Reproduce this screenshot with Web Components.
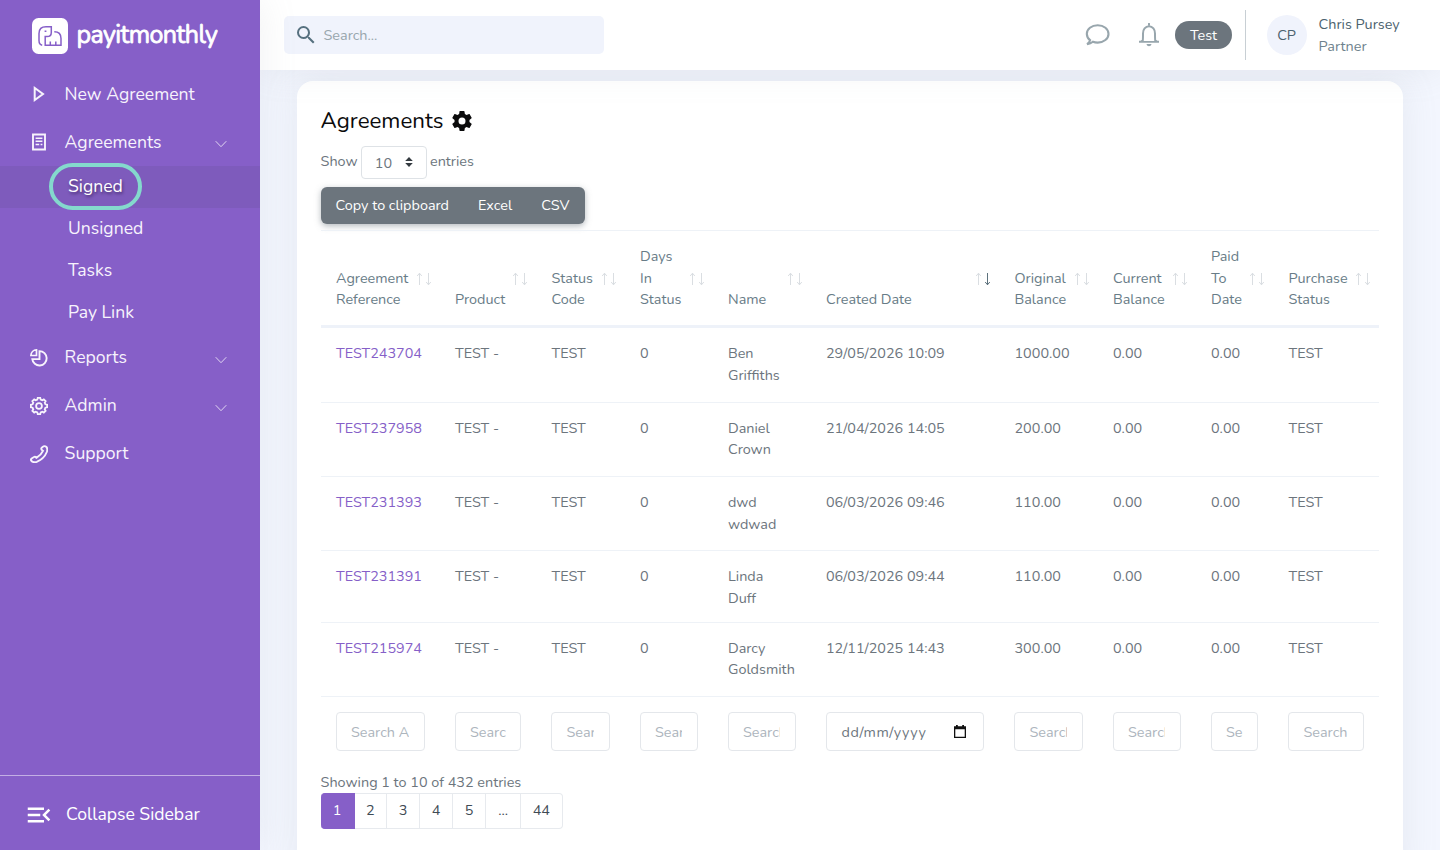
<!DOCTYPE html>
<html lang="en">
<head>
<meta charset="utf-8">
<title>Agreements</title>
<style>
    body {
        margin: 0;
        height: 850px;
        overflow: hidden;
        background: #f3f6fe;
        color: #6c757d;
        font: 14.4px/21.6px Nunito, Lato, sans-serif;
    }
</style>
</head>
<body>
<app-shell>
    <side-bar slot="sidebar"></side-bar>
    <top-bar slot="topbar"></top-bar>
    <agreements-card></agreements-card>
</app-shell>

<script>
// Closed outline with rounded teeth for the settings icon
function gearPath(teeth, inner, outer) {
    const pts = [];
    const step = Math.PI * 2 / teeth;
    for (let i = 0; i < teeth; i++) {
        const a = i * step - Math.PI / 2;
        [[-0.33, inner], [-0.2, outer], [0.2, outer], [0.33, inner]].forEach(([o, r]) => {
            pts.push((9 + r * Math.cos(a + o * step)).toFixed(2) + ' ' + (9 + r * Math.sin(a + o * step)).toFixed(2));
        });
    }
    return 'M' + pts.join('L') + 'Z';
}

const ICONS = {
    play: ['0 0 18 18', '<path d="M4.7 3v12l8.3-6z" class="s" stroke-width="2"/>'],
    doc: ['0 0 18 18', '<path d="M3 1.5h12v15H3z" class="s" stroke-width="1.9"/><path d="M5.6 5.2h6.8M5.6 8.3h6.8M5.6 11.6h3.6M10.6 11.6h1.8" class="s" stroke-width="1.5"/>'],
    pie: ['0 0 18 18', '<path d="M9.5 2.1a7.2 7.2 0 1 1-7.2 8h7.2z" class="s" stroke-width="1.9"/><path d="M6.5.9v5.6H.9A5.8 5.8 0 0 1 6.5.9z" class="s" stroke-width="1.7"/>'],
    gear: ['0 0 18 18', `<path d="${gearPath(8, 6.6, 8.2)}" class="s" stroke-width="1.8"/><circle cx="9" cy="9" r="2.9" class="s" stroke-width="1.8"/>`],
    phone: ['0 0 18 18', '<path d="M12.2 2.3Q14.5.3 16.2 1.7 18 3.4 16.8 7 14 14 6.7 16.8 3.2 18 1.2 15.6.4 14.2 2 13.2L4 12Q5.2 11.4 6.4 12.8 11 10.2 13 5.8 11.2 4.8 11.2 3.8 11.3 3 12.2 2.3Z" class="s" stroke-width="1.9"/>'],
    collapse: ['0 0 24 24', '<path d="M21 15.61 19.59 17l-5.01-5 5.01-5L21 8.39 17.44 12 21 15.61M3 6h13v2H3V6m0 7v-2h10v2H3m0 5v-2h13v2H3z"/>'],
    chevron: ['0 0 12 8', '<path d="M.7 1.2 6 6.7l5.3-5.5" class="s" stroke-width="1"/>'],
    search: ['0 0 24 24', '<path d="M9.5 3A6.5 6.5 0 0 1 16 9.5c0 1.61-.59 3.09-1.56 4.23l.27.27h.79l5 5-1.5 1.5-5-5v-.79l-.27-.27A6.516 6.516 0 0 1 9.5 16 6.5 6.5 0 0 1 3 9.5 6.5 6.5 0 0 1 9.5 3m0 2C7 5 5 7 5 9.5S7 14 9.5 14 14 12 14 9.5 12 5 9.5 5z"/>'],
    chat: ['0 0 24 22', '<path d="M4.6 16.2A8.1 8.1 0 0 1 1.3 9.9C1.3 5.2 6 1.2 12.2 1.2S23 5.2 23 9.9s-4.7 8.7-10.8 8.7c-1.8 0-3.4-.3-4.8-.9-1.5 1.2-3.3 2-5.8 2.4 1.5-1.1 2.6-2.4 3-3.9z" class="s" stroke-width="2.1"/>'],
    bell: ['0 0 20 24', '<path d="M3.6 18.5c.4-1 .4-2.6.4-8A6 6.8 0 0 1 10 3.2a6 6.8 0 0 1 6 7.3c0 5.4 0 7 .4 8" class="s" stroke-width="2"/><path d="M0 17.8h1.5l1.7-1v1.2h13.6v-1.2l1.7 1H20v2H0zM7.500 21h5c-.3 1.6-1.3 2.2-2.5 2.2S7.8 22.6 7.5 21zM9 .8a1 1 0 0 1 2 0v2H9z"/>'],
    cog: ['0 0 24 24', '<path d="M12 15.5A3.5 3.5 0 0 1 8.5 12 3.5 3.5 0 0 1 12 8.5a3.5 3.5 0 0 1 3.5 3.5 3.5 3.5 0 0 1-3.5 3.5m7.43-2.53c.04-.32.07-.64.07-.97 0-.33-.03-.66-.07-1l2.11-1.63c.19-.15.24-.42.12-.64l-2-3.46c-.12-.22-.39-.31-.61-.22l-2.49 1c-.52-.39-1.06-.73-1.69-.98l-.37-2.65A.506.506 0 0 0 14 2h-4c-.25 0-.46.18-.5.42l-.37 2.65c-.63.25-1.17.59-1.69.98l-2.49-1c-.22-.09-.49 0-.61.22l-2 3.46c-.13.22-.07.49.12.64L4.57 11c-.04.34-.07.67-.07 1 0 .33.03.65.07.97l-2.11 1.66c-.19.15-.25.42-.12.64l2 3.46c.12.22.39.3.61.22l2.49-1.01c.52.4 1.06.74 1.69.99l.37 2.65c.04.24.25.42.5.42h4c.25 0 .46-.18.5-.42l.37-2.65c.63-.26 1.17-.59 1.69-.99l2.49 1.01c.22.08.49 0 .61-.22l2-3.46c.12-.22.07-.49-.12-.64l-2.11-1.66z"/>'],
    updown: ['0 0 8 10', '<path d="M4 0l3.8 4.1H.2zM4 10 .2 5.9h7.6z"/>'],
    calendar: ['0 0 12 13', '<path d="M2 0h1.8v1.2h4.4V0H10v1.2h2V13H0V1.2h2zM1.3 4.3v7.4h9.4V4.3z" fill-rule="evenodd"/>'],
    logo: ['0 0 36 36', '<rect width="36" height="36" rx="6.5" fill="#fff"/><path d="M10.2 27.2Q7 26.5 7 22.5V15.5Q7 8.7 14 8.7H19.3V14.5Q19.3 18.6 15 18.6H13.2V27.3H29V20.5Q29 13.7 22.3 13.7M18.3 27V23.4M23.8 27V23.4M12.6 13.3h1.8" fill="none" stroke="#865fc8" stroke-width="1.5"/>']
};

class UiIcon extends HTMLElement {
    connectedCallback() {
        const [box, body] = ICONS[this.getAttribute('name')];
        const w = this.getAttribute('w');
        const h = this.getAttribute('h') || w;
        this.attachShadow({ mode: 'open' }).innerHTML = `
            <style>
                :host { display: inline-block; flex: none; }
                svg { display: block; fill: currentColor; }
                .s { fill: none; stroke: currentColor; }
            </style>
            <svg width="${w}" height="${h}" viewBox="${box}">${body}</svg>
        `;
    }
}
customElements.define('ui-icon', UiIcon);

class AppShell extends HTMLElement {
    constructor() {
        super();
        this.attachShadow({ mode: 'open' }).innerHTML = `
            <style>
                :host { display: grid; grid-template: 70px 780px / 260px 1180px; }
                .side { grid-row: 1 / 3; z-index: 3; }
                .top { z-index: 2; }
                .main { padding: 11px 37px 0 36.6px; overflow: hidden; }
            </style>
            <div class="side"><slot name="sidebar"></slot></div>
            <div class="top"><slot name="topbar"></slot></div>
            <div class="main"><slot></slot></div>
        `;
    }
}
customElements.define('app-shell', AppShell);

class NavItem extends HTMLElement {
    connectedCallback() {
        const icon = this.getAttribute('icon');
        this.attachShadow({ mode: 'open' }).innerHTML = `
            <style>
                :host {
                    display: flex;
                    align-items: center;
                    height: 47.9px;
                    padding: 0 33.5px 0 30px;
                    font-size: 17.6px;
                    color: #f7f3fc;
                }
                :host([sub]) { height: 42px; padding-left: 68px; }
                :host([active]) { background: rgba(90, 75, 130, .16); }
                ui-icon { margin-top: 1px; }
                .label { margin-left: 16.6px; flex: 1; padding-top: 1px; }
                :host([sub]) .label { margin: 0; position: relative; }
                :host([active]) .label { text-shadow: 1px 2px 3px rgba(40, 20, 70, .6); color: #fff; }
                .ring {
                    position: absolute;
                    left: -19px;
                    top: -12px;
                    width: 85px;
                    height: 39px;
                    border: 4px solid #84d9cd;
                    border-radius: 24px;
                }
                .arrow { opacity: .8; margin-top: 5px; }
            </style>
            ${icon ? `<ui-icon name="${icon}" w="18"></ui-icon>` : ''}
            <div class="label">
                ${this.hasAttribute('active') ? '<span class="ring"></span>' : ''}
                <slot></slot>
            </div>
            ${this.hasAttribute('more') ? '<ui-icon class="arrow" name="chevron" w="12" h="8"></ui-icon>' : ''}
        `;
    }
}
customElements.define('nav-item', NavItem);

class SideBar extends HTMLElement {
    connectedCallback() {
        this.attachShadow({ mode: 'open' }).innerHTML = `
            <style>
                :host {
                    display: flex;
                    flex-direction: column;
                    height: 850px;
                    background: #865fc8;
                    color: #fff;
                    box-shadow: 0 0 35px rgba(154, 161, 171, .15);
                }
                .logo { display: flex; height: 52px; padding: 18px 0 0 32px; }
                .brand {
                    margin: 2px 0 0 8.5px;
                    font-size: 25px;
                    line-height: 30px;
                    letter-spacing: -.58px;
                    -webkit-text-stroke: .8px #fff;
                }
                nav { flex: 1; }
                .collapse {
                    display: flex;
                    align-items: center;
                    gap: 12.4px;
                    height: 75px;
                    padding: 3px 0 0 23.6px;
                    box-sizing: border-box;
                    border-top: 1px solid #c3afe4;
                    font-size: 17.6px;
                }
            </style>
            <div class="logo">
                <ui-icon name="logo" w="36"></ui-icon>
                <span class="brand">payitmonthly</span>
            </div>
            <nav>
                <nav-item icon="play">New Agreement</nav-item>
                <nav-item icon="doc" more>Agreements</nav-item>
                <nav-item sub active>Signed</nav-item>
                <nav-item sub>Unsigned</nav-item>
                <nav-item sub>Tasks</nav-item>
                <nav-item sub>Pay Link</nav-item>
                <nav-item icon="pie" more>Reports</nav-item>
                <nav-item icon="gear" more>Admin</nav-item>
                <nav-item icon="phone">Support</nav-item>
            </nav>
            <div class="collapse">
                <ui-icon name="collapse" w="30"></ui-icon>
                <span>Collapse Sidebar</span>
            </div>
        `;
    }
}
customElements.define('side-bar', SideBar);

class TopBar extends HTMLElement {
    connectedCallback() {
        this.attachShadow({ mode: 'open' }).innerHTML = `
            <style>
                :host {
                    display: flex;
                    align-items: center;
                    height: 70px;
                    box-sizing: border-box;
                    padding: 0 0 0 24px;
                    background: #fff;
                    box-shadow: 0 0 35px rgba(154, 161, 171, .15);
                    color: #98a6ad;
                }
                .search {
                    display: flex;
                    align-items: center;
                    gap: 6px;
                    width: 310.5px;
                    height: 38px;
                    padding-left: 9.5px;
                    border-radius: 5px;
                    background: #f0f3fc;
                }
                .search ui-icon { color: #56707f; }
                .search span { padding-top: 1px; }
                .chat { margin: 0 0 1px 481px; }
                .bell { margin: 0 16.6px 1px 28.5px; }
                .badge {
                    width: 57px;
                    height: 28px;
                    line-height: 28px;
                    text-align: center;
                    border-radius: 14px;
                    background: #6c757d;
                    color: #fff;
                }
                .rule { width: 1px; height: 50px; margin: 0 21px 0 12.5px; background: #c8cfd4; }
                .avatar {
                    width: 40px;
                    height: 40px;
                    line-height: 40px;
                    text-align: center;
                    border-radius: 50%;
                    background: #f0f3fc;
                    color: #4b626e;
                }
                .user { margin-left: 12px; padding-top: 2px; color: #4b626e; }
                .user div + div { color: #6e828d; }
            </style>
            <div class="search">
                <ui-icon name="search" w="24"></ui-icon>
                <span>Search...</span>
            </div>
            <ui-icon class="chat" name="chat" w="25" h="22"></ui-icon>
            <ui-icon class="bell" name="bell" w="20" h="24"></ui-icon>
            <div class="badge">Test</div>
            <div class="rule"></div>
            <div class="avatar">CP</div>
            <div class="user">
                <div>Chris Pursey</div>
                <div>Partner</div>
            </div>
        `;
    }
}
customElements.define('top-bar', TopBar);

const COLUMNS = [
    { head: ['Agreement', 'Reference'] },
    { head: ['Product'] },
    { head: ['Status', 'Code'] },
    { head: ['Days', 'In', 'Status'] },
    { head: ['Name'] },
    { head: ['Created Date'], sorted: true, date: true },
    { head: ['Original', 'Balance'] },
    { head: ['Current', 'Balance'] },
    { head: ['Paid', 'To', 'Date'] },
    { head: ['Purchase', 'Status'] }
];

const ROWS = [
    ['TEST243704', ['Ben', 'Griffiths'], '29/05/2026 10:09', '1000.00'],
    ['TEST237958', ['Daniel', 'Crown'], '21/04/2026 14:05', '200.00'],
    ['TEST231393', ['dwd', 'wdwad'], '06/03/2026 09:46', '110.00'],
    ['TEST231391', ['Linda', 'Duff'], '06/03/2026 09:44', '110.00'],
    ['TEST215974', ['Darcy', 'Goldsmith'], '12/11/2025 14:43', '300.00']
];

const lines = list => list.map(text => `<div>${text}</div>`).join('');

class DataGrid extends HTMLElement {
    connectedCallback() {
        const head = COLUMNS.map(c => `
            <div class="cell">
                ${lines(c.head)}
                <svg class="sort" width="16" height="14" viewBox="0 0 16 14" fill="none">
                    <path d="M3.5 13V1M1.2 4l2.3-2.8L5.8 4" stroke="#dadee2"/>
                    <path d="M12.5 1v12M10.2 10l2.3 2.8 2.3-2.8" stroke="${c.sorted ? '#5d727d' : '#dadee2'}"/>
                </svg>
            </div>`).join('');

        const body = ROWS.map(([ref, name, date, amount]) => {
            const cells = [[ref], ['TEST -'], ['TEST'], ['0'], name, [date], [amount], ['0.00'], ['0.00'], ['TEST']];
            return `<div class="row">${cells.map(c => `<div class="cell">${lines(c)}</div>`).join('')}</div>`;
        }).join('');

        const foot = COLUMNS.map(c => `
            <div class="cell">${c.date
                ? '<div class="input date"><span>dd/mm/yyyy</span><ui-icon name="calendar" w="12" h="13"></ui-icon></div>'
                : `<input class="input" placeholder="Search ${c.head.join(' ')}">`}</div>`).join('');

        this.attachShadow({ mode: 'open' }).innerHTML = `
            <style>
                :host { display: block; border-top: 1px solid #eef2f7; }
                .row {
                    display: grid;
                    grid-template-columns: 119px 96.5px 88.5px 88px 98px 188.5px 98.5px 98px 77.5px 105.5px;
                    box-sizing: border-box;
                    height: 74.4px;
                    border-bottom: 1px solid #eef2f7;
                    line-height: 21.7px;
                }
                .row:nth-of-type(5) { height: 71.4px; }
                .cell { padding: 15px 0 0 15.4px; min-width: 0; }
                .row .cell:first-child { color: #865fc8; }
                .head.row { height: 97.7px; border-bottom: 3px solid #eef2f9; color: #687c87; }
                .head.row .cell {
                    display: flex;
                    flex-direction: column;
                    justify-content: flex-end;
                    position: relative;
                    padding: 0 0 14.2px 15.4px;
                    color: inherit;
                }
                .sort { position: absolute; right: 8px; top: 41px; }
                .foot.row { border: 0; height: 74.4px; }
                .foot .cell { padding: 15px 15px 0 15px; }
                .input {
                    display: block;
                    box-sizing: border-box;
                    width: 100%;
                    height: 38.5px;
                    margin: 0;
                    padding: 1px 14.4px 0;
                    border: 1px solid #e4e7eb;
                    border-radius: 4px;
                    background: #fff;
                    font: inherit;
                }
                .input::placeholder { color: #adb5bd; opacity: 1; }
                .date {
                    display: flex;
                    align-items: center;
                    justify-content: space-between;
                    color: #6c757d;
                }
                .date span { letter-spacing: .65px; margin-left: .5px; padding-top: 1px; }
                .date ui-icon { color: #111; margin: 0 3px 1px 0; }
            </style>
            <div class="row head">${head}</div>
            ${body}
            <div class="row foot">${foot}</div>
        `;
    }
}
customElements.define('data-grid', DataGrid);

class PageList extends HTMLElement {
    connectedCallback() {
        const pages = [['1', 34], ['2', 32.5], ['3', 33], ['4', 33], ['5', 33], ['...', 35], ['44', 41.5]];
        this.attachShadow({ mode: 'open' }).innerHTML = `
            <style>
                :host { display: flex; color: #3f4b55; }
                span {
                    box-sizing: border-box;
                    height: 35.5px;
                    line-height: 33px;
                    text-align: center;
                    border: 1px solid #e7eaee;
                    border-left: 0;
                }
                span:first-of-type { background: #865fc8; border-color: #865fc8; color: #fff; border-radius: 4px 0 0 4px; }
                span:last-of-type { border-radius: 0 4px 4px 0; }
            </style>
            ${pages.map(([p, w]) => `<span style="width:${w}px">${p}</span>`).join('')}
        `;
    }
}
customElements.define('page-list', PageList);

class AgreementsCard extends HTMLElement {
    connectedCallback() {
        this.attachShadow({ mode: 'open' }).innerHTML = `
            <style>
                :host {
                    display: block;
                    box-sizing: border-box;
                    height: 800px;
                    padding: 24px;
                    border-radius: 16px;
                    background: #fff;
                    box-shadow: 0 0 35px rgba(154, 161, 171, .15);
                }
                h4 {
                    display: flex;
                    align-items: center;
                    gap: 6px;
                    height: 30px;
                    margin: 0;
                    font-size: 22.3px;
                    font-weight: 400;
                    color: #0b0b0c;
                }
                h4 span { padding-top: 1px; }
                h4 ui-icon { margin-top: 2px; }
                .length { display: flex; gap: 3.2px; margin-top: 11px; height: 33px; line-height: 30px; }
                .select {
                    display: flex;
                    align-items: center;
                    justify-content: space-between;
                    box-sizing: border-box;
                    width: 66px;
                    height: 33px;
                    padding: 0 12.5px 0 13px;
                    border: 1px solid #dee2e6;
                    border-radius: 4px;
                }
                .select ui-icon { color: #343a40; margin-bottom: 1px; }
                .buttons {
                    display: flex;
                    align-items: center;
                    gap: 29px;
                    box-sizing: border-box;
                    width: 264px;
                    height: 37px;
                    margin: 7.5px 0 6px;
                    padding: 1px 0 0 15px;
                    border-radius: 6px;
                    background: #6c757d;
                    color: #fff;
                    box-shadow: 0 2px 6px rgba(108, 117, 125, .5);
                }
                .info { height: 21.6px; }
            </style>
            <h4><span>Agreements</span><ui-icon name="cog" w="24"></ui-icon></h4>
            <div class="length">
                <span>Show</span>
                <div class="select"><span>10</span><ui-icon name="updown" w="8" h="10"></ui-icon></div>
                <span>entries</span>
            </div>
            <div class="buttons">
                <span>Copy to clipboard</span>
                <span>Excel</span>
                <span>CSV</span>
            </div>
            <data-grid></data-grid>
            <div class="info">Showing 1 to 10 of 432 entries</div>
            <page-list></page-list>
        `;
    }
}
customElements.define('agreements-card', AgreementsCard);
</script>
</body>
</html>
